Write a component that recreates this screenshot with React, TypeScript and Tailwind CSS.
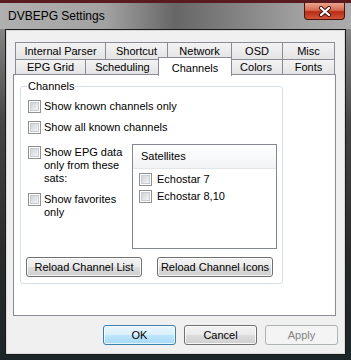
const font = { fontFamily: '"Liberation Sans", Arial, sans-serif' };

function Check() {
  return (
    <span className="flex h-[13px] w-[13px] shrink-0 items-center justify-center border border-[#8e8f8f] bg-white">
      <span className="h-[9px] w-[9px] border border-[#c9ccd1] bg-[linear-gradient(135deg,#d0d3d8,#f4f4f5)]" />
    </span>
  );
}

function CheckRow({ label, className = "" }: { label: string; className?: string }) {
  return (
    <div className={"flex items-start gap-[3px] " + className}>
      <Check />
      <span className="text-[11px] leading-[13px] text-black">{label}</span>
    </div>
  );
}

function Btn({ label, className = "" }: { label: string; className?: string }) {
  return (
    <button className={"flex h-[20px] items-center justify-center rounded-[3px] border border-[#707070] bg-[linear-gradient(180deg,#f2f2f2_0%,#ebebeb_50%,#dddddd_51%,#cfcfcf_100%)] text-[11px] text-black shadow-[inset_0_0_0_1px_rgba(255,255,255,0.8)] " + className}>
      {label}
    </button>
  );
}

function Tab({ label, w, active = false }: { label: string; w: string; active?: boolean }) {
  if (active)
    return (
      <div className={"relative z-10 -mx-[2px] -mb-px flex h-[19px] items-start justify-center border border-b-0 border-[#898c95] bg-white pt-[2px] text-[11px] text-black " + w}>
        {label}
      </div>
    );
  return (
    <div className={"-ml-px flex h-full items-center justify-center border border-b-0 border-[#898c95] bg-[linear-gradient(180deg,#f3f3f3,#e3e3e3)] text-[11px] text-black first:ml-0 " + w}>
      {label}
    </div>
  );
}

export default function App() {
  return (
    <div
      style={font}
      className="flex h-[360px] w-[351px] flex-col overflow-hidden border-t-[3px] border-[#5a1b20] bg-[linear-gradient(180deg,#9a9a9a_0px,#7a7a7a_40px,#444444_120px,#2a2a2a_250px,#1b2628_357px)]"
    >
      {/* title bar */}
      <div className="flex h-[26px] shrink-0 items-start bg-[linear-gradient(90deg,#b0b0b0_0%,#a2a2a2_30%,#666666_50%,#7e7e7e_65%,#a0a0a0_85%,#ababab_100%)]">
        <span className="ml-[8px] mt-[6px] text-[12px] leading-[14px] text-black">DVBEPG Settings</span>
        <div className="ml-auto mr-[6px] flex h-[17px] w-[41px] items-center justify-center rounded-b-[4px] border border-t-0 border-[#4a1410] bg-[linear-gradient(180deg,#e9a48f_0%,#d66a50_45%,#b82c14_55%,#d2553a_100%)]">
          <svg width="14" height="11" viewBox="0 0 14 11">
            <path d="M3 2 L11 9 M11 2 L3 9" stroke="#3a1010" strokeWidth="4" strokeLinecap="round" />
            <path d="M3 2 L11 9 M11 2 L3 9" stroke="#ffffff" strokeWidth="2.2" strokeLinecap="round" />
          </svg>
        </div>
      </div>

      {/* client area */}
      <div className="mx-[6px] mt-px flex flex-1 flex-col border border-[#d9d9d9] bg-[#f0f0f0] px-[6px] pt-[11px] outline outline-1 outline-[#1a1a1a]">
        {/* tabs */}
        <div className="pl-[2px] pr-[2px]">
          <div className="flex h-[18px]">
            <Tab label="Internal Parser" w="w-[91px]" />
            <Tab label="Shortcut" w="w-[63px]" />
            <Tab label="Network" w="w-[65px]" />
            <Tab label="OSD" w="w-[52px]" />
            <Tab label="Misc" w="w-[53px]" />
          </div>
          <div className="-mt-px flex h-[16px] items-end">
            <Tab label="EPG Grid" w="w-[71px]" />
            <Tab label="Scheduling" w="w-[75px]" />
            <Tab label="Channels" w="w-[74px]" active />
            <Tab label="Colors" w="w-[54px]" />
            <Tab label="Fonts" w="w-[53px]" />
          </div>
        </div>

        {/* panel */}
        <div className="-mt-px h-[242px] w-[323px] border border-[#898c95] bg-white px-[6px] pt-[5px]">
          <fieldset className="h-[204px] w-[263px] rounded-[3px] border border-[#d5dfe5] pl-[7px] pr-[4px]">
            <legend className="-ml-[1px] px-[1px] text-[11px] leading-[13px] text-black">Channels</legend>
            <CheckRow label="Show known channels only" className="mt-[7px]" />
            <CheckRow label="Show all known channels" className="mt-[8px]" />
            <div className="mt-[10px] flex">
              <div className="w-[104px] pt-[2px]">
                <CheckRow label="Show EPG data only from these sats:" className="pr-[6px]" />
                <CheckRow label="Show favorites only" className="mt-[8px] pr-[8px]" />
              </div>
              <div className="h-[105px] w-[145px] border border-[#828790] bg-white">
                <div className="flex h-[24px] items-center border-b border-[#e3e5e8] bg-[linear-gradient(180deg,#ffffff,#f2f3f5)] pl-[8px] text-[11px] text-black">
                  Satellites
                </div>
                <div className="flex items-center gap-[5px] pl-[6px] pt-[4px] text-[11px] leading-[13px] text-black">
                  <Check />
                  Echostar 7
                </div>
                <div className="flex items-center gap-[5px] pl-[6px] pt-[4px] text-[11px] leading-[13px] text-black">
                  <Check />
                  Echostar 8,10
                </div>
              </div>
            </div>
            <div className="-ml-[2px] mt-[8px] flex gap-[15px]">
              <Btn label="Reload Channel List" className="w-[116px]" />
              <Btn label="Reload Channel Icons" className="w-[116px]" />
            </div>
          </fieldset>
        </div>

        {/* dialog buttons */}
        <div className="mt-[9px] flex justify-end gap-[8px]">
          <button className="flex h-[20px] w-[73px] items-center justify-center rounded-[3px] border border-[#3c7fb1] bg-[linear-gradient(180deg,#eaf6fd_0%,#d9f0fc_50%,#bee6fd_51%,#a7d9f5_100%)] text-[11px] text-black shadow-[inset_0_0_0_1px_rgba(255,255,255,0.7)]">
            OK
          </button>
          <Btn label="Cancel" className="w-[73px]" />
          <button className="flex h-[20px] w-[73px] items-center justify-center rounded-[3px] border border-[#adb2b5] bg-[#f4f4f4] text-[11px] text-[#838383]">
            Apply
          </button>
        </div>
      </div>
      <div className="h-[6px] shrink-0" />
    </div>
  );
}
